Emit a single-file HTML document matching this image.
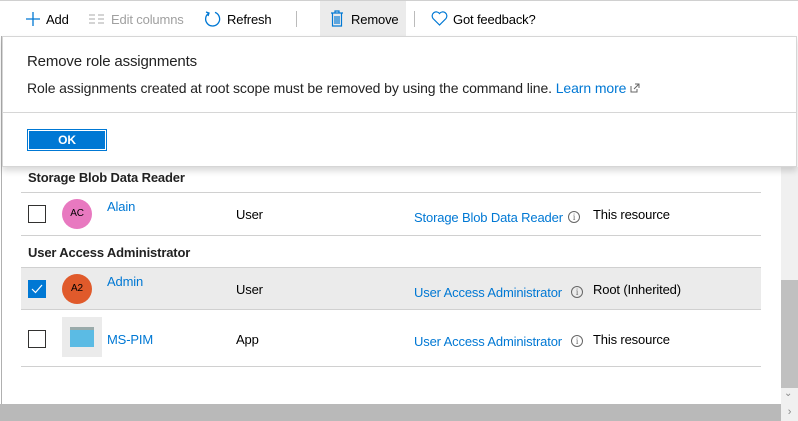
<!DOCTYPE html>
<html><head><meta charset="utf-8"><style>
*{margin:0;padding:0;box-sizing:border-box}
body{width:798px;height:421px;overflow:hidden;background:#fff;font-family:"Segoe UI","Liberation Sans",sans-serif;font-size:13px;letter-spacing:-0.15px;color:#000;position:relative}
.a{position:absolute;white-space:nowrap}
.blue{color:#0078d4}
.line{position:absolute;height:1px;background:#d0d0d0}
.cb{position:absolute;width:18px;height:18px;border:1px solid #323130;background:#fff}
.av{position:absolute;width:30px;height:30px;border-radius:50%;font-size:10px;text-align:center;line-height:30px}
.info{position:absolute;width:12px;height:12px;border:1px solid #666;border-radius:50%;font-size:9px;line-height:10px;text-align:center;color:#666;font-family:"Liberation Serif",serif}
</style></head><body>
<div class="a" style="left:0;top:0;width:798px;height:1px;background:#d0d0d0"></div>
<svg class="a" style="left:25px;top:11px" width="16" height="16"><path d="M8 1v14M1 8h14" stroke="#0078d4" stroke-width="1.3"/></svg>
<div class="a" style="left:46px;top:12px">Add</div>
<svg class="a" style="left:89px;top:14px" width="16" height="12"><path d="M0 1h6M0 5h6M0 9h6M9 1h6M9 5h6M9 9h6" stroke="#aaa" stroke-width="1"/></svg>
<div class="a" style="left:111px;top:12px;color:#a0a0a0">Edit columns</div>
<svg class="a" style="left:204px;top:10px" width="18" height="18"><path d="M5 3A7 7 0 1 0 11 2.4" fill="none" stroke="#0078d4" stroke-width="1.3"/><path d="M2 2l3 1-1 3" fill="none" stroke="#0078d4" stroke-width="1.3"/></svg>
<div class="a" style="left:227px;top:12px">Refresh</div>
<div class="a" style="left:296px;top:11px;width:1px;height:16px;background:#bbb"></div>
<div class="a" style="left:320px;top:1px;width:86px;height:35px;background:#ebebeb"></div>
<svg class="a" style="left:330px;top:10px" width="14" height="17"><path d="M1 3h12M5 3V1h4v2M2.5 3v13h9V3M5 6v8M7 6v8M9 6v8" fill="none" stroke="#0078d4" stroke-width="1.2"/></svg>
<div class="a" style="left:351px;top:12px">Remove</div>
<div class="a" style="left:414px;top:11px;width:1px;height:16px;background:#bbb"></div>
<svg class="a" style="left:431px;top:11px" width="17" height="15"><path d="M8.5 14L2 7.5A3.6 3.6 0 0 1 8.5 2.5A3.6 3.6 0 0 1 15 7.5Z" fill="none" stroke="#0078d4" stroke-width="1.2"/></svg>
<div class="a" style="left:453px;top:12px">Got feedback?</div>
<div class="a" style="left:1px;top:36px;width:1px;height:370px;background:#b0b0b0"></div>
<div class="a" style="left:28px;top:170px;font-weight:bold;font-size:13px;color:#222">Storage Blob Data Reader</div>
<div class="line" style="left:21px;top:192px;width:740px"></div>
<div class="cb" style="left:28px;top:205px"></div>
<div class="av" style="left:62px;top:199px;background:#e879c0">AC</div>
<div class="a blue" style="left:107px;top:199px">Alain</div>
<div class="a" style="left:236px;top:207px">User</div>
<div class="a blue" style="left:414px;top:210px">Storage Blob Data Reader</div>
<div class="info" style="left:568px;top:211px">i</div>
<div class="a" style="left:593px;top:207px">This resource</div>
<div class="line" style="left:21px;top:235px;width:740px"></div>
<div class="a" style="left:28px;top:245px;font-weight:bold;color:#222">User Access Administrator</div>
<div class="a" style="left:21px;top:267px;width:740px;height:43px;background:#ebebeb;border-top:1px solid #d0d0d0;border-bottom:1px solid #d0d0d0"></div>
<div class="a" style="left:28px;top:280px;width:18px;height:18px;background:#0078d4"><svg width="18" height="18"><path d="M4 9l3.5 3.5L14 5" fill="none" stroke="#fff" stroke-width="1.2"/></svg></div>
<div class="av" style="left:62px;top:274px;background:#e05a2b">A2</div>
<div class="a blue" style="left:107px;top:274px">Admin</div>
<div class="a" style="left:236px;top:282px">User</div>
<div class="a blue" style="left:414px;top:285px">User Access Administrator</div>
<div class="info" style="left:571px;top:286px">i</div>
<div class="a" style="left:593px;top:282px">Root (Inherited)</div>
<div class="cb" style="left:28px;top:330px"></div>
<div class="a" style="left:62px;top:317px;width:40px;height:40px;background:#ebebeb"><div style="position:absolute;left:8px;top:10px;width:24px;height:20px;background:#5bbbe4;border-top:3px solid #9aa"></div></div>
<div class="a blue" style="left:107px;top:332px">MS-PIM</div>
<div class="a" style="left:236px;top:332px">App</div>
<div class="a blue" style="left:414px;top:334px">User Access Administrator</div>
<div class="info" style="left:571px;top:335px">i</div>
<div class="a" style="left:593px;top:332px">This resource</div>
<div class="line" style="left:21px;top:366px;width:740px"></div>
<div class="a" style="left:781px;top:167px;width:17px;height:238px;background:#f0f0f0"></div>
<div class="a" style="left:781px;top:280px;width:17px;height:108px;background:#c0c0c0"></div>
<div class="a" style="left:784px;top:388px;font-size:10px;color:#888">⌄</div>
<div class="a" style="left:0;top:404px;width:781px;height:17px;background:#b9b9b9"></div>
<div class="a" style="left:781px;top:404px;width:17px;height:17px;background:#f0f0f0;font-size:11px;color:#888;text-align:center;line-height:17px">›</div>
<div class="a" style="left:2px;top:36px;width:795px;height:131px;background:#fff;border:1px solid #d6d6d6;box-shadow:0 4px 6px rgba(0,0,0,0.15)">
<div class="a" style="left:24px;top:16px;font-size:15px;color:#222">Remove role assignments</div>
<div class="a" style="left:24px;top:43px;color:#222;font-size:14px;letter-spacing:-0.1px">Role assignments created at root scope must be removed by using the command line. <span class="blue">Learn more</span> <svg width="10" height="10" style="vertical-align:0"><path d="M1 3v6h6V6M5 1h4v4M9 1L4 6" fill="none" stroke="#666" stroke-width="1"/></svg></div>
<div class="a" style="left:0;top:75px;width:793px;height:1px;background:#d6d6d6"></div>
<div class="a" style="left:24px;top:92px;width:80px;height:22px;background:#0078d4;border:1px solid #0078d4;box-shadow:inset 0 0 0 1px #fff;color:#fff;font-weight:bold;font-size:12px;text-align:center;line-height:20px">OK</div>
</div>
</body></html>
